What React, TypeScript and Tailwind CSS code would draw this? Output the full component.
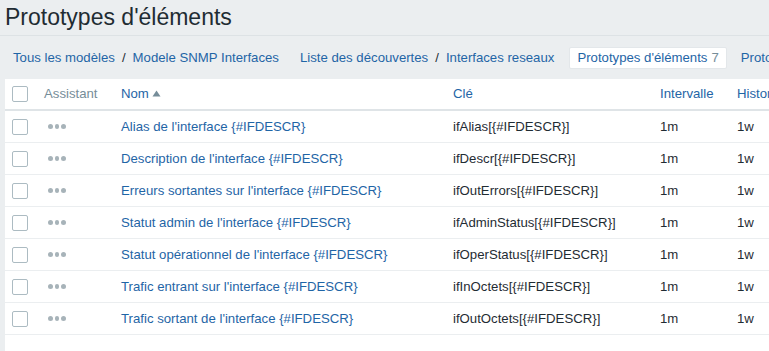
import React from 'react';

const rows = [
  { name: "Alias de l'interface {#IFDESCR}", key: 'ifAlias[{#IFDESCR}]' },
  { name: "Description de l'interface {#IFDESCR}", key: 'ifDescr[{#IFDESCR}]' },
  { name: "Erreurs sortantes sur l'interface {#IFDESCR}", key: 'ifOutErrors[{#IFDESCR}]' },
  { name: "Statut admin de l'interface {#IFDESCR}", key: 'ifAdminStatus[{#IFDESCR}]' },
  { name: "Statut opérationnel de l'interface {#IFDESCR}", key: 'ifOperStatus[{#IFDESCR}]' },
  { name: "Trafic entrant sur l'interface {#IFDESCR}", key: 'ifInOctets[{#IFDESCR}]' },
  { name: "Trafic sortant de l'interface {#IFDESCR}", key: 'ifOutOctets[{#IFDESCR}]' },
];

const cols = 'grid grid-cols-[32px_77px_332px_207px_77px_200px]';

function Checkbox() {
  return <span className="block w-4 h-4 bg-white border border-[#acbbc2] rounded-[2px]" />;
}

function Dots() {
  return (
    <span className="flex gap-[2px]">
      <span className="w-[4.5px] h-[4.5px] rounded-full bg-[#a7b3b9]" />
      <span className="w-[4.5px] h-[4.5px] rounded-full bg-[#a7b3b9]" />
      <span className="w-[4.5px] h-[4.5px] rounded-full bg-[#a7b3b9]" />
    </span>
  );
}

export default function App() {
  return (
    <div className="w-[769px] h-[351px] overflow-hidden bg-[#ebeef0] text-[13.2px] text-[#1f2c33] font-['Liberation_Sans',Arial,sans-serif]">
      {/* Title */}
      <div className="h-[36px] border-b border-[#dde2e5] pl-[5px] flex items-start">
        <h1 className="text-[23px] leading-[34px] whitespace-nowrap">Prototypes d'éléments</h1>
      </div>

      {/* Breadcrumbs */}
      <div className="h-[43px] flex items-center whitespace-nowrap pl-[13px] text-[#1f65a6]">
        <span>Tous les modèles</span>
        <span className="mx-[7px] text-[#1f2c33]">/</span>
        <span>Modele SNMP Interfaces</span>
        <span className="ml-[21px]">Liste des découvertes</span>
        <span className="mx-[7px] text-[#1f2c33]">/</span>
        <span>Interfaces reseaux</span>
        <span className="ml-[15px] h-[22px] px-[7px] flex items-center bg-white border border-[#e3e7ea] rounded-[2px]">
          Prototypes d'éléments <span className="ml-[4px] text-[#768d99]">7</span>
        </span>
        <span className="ml-[14px]">Prototypes de déclencheurs</span>
      </div>

      {/* Table */}
      <div className="ml-[5px] bg-white whitespace-nowrap">
        <div className={`${cols} h-[32px] items-center border-b-2 border-[#dfe4e7] pl-[7px]`}>
          <Checkbox />
          <span className="text-[#768d99]">Assistant</span>
          <span className="text-[#1f65a6] flex items-center">
            Nom
            <svg width="9" height="7" viewBox="0 0 9 7" className="ml-[3px]">
              <path d="M4.5 0.5 L8.5 6.5 L0.5 6.5 Z" fill="#768d99" />
            </svg>
          </span>
          <span className="text-[#1f65a6]">Clé</span>
          <span className="text-[#1f65a6]">Intervalle</span>
          <span className="text-[#1f65a6]">Historique</span>
        </div>
        {rows.map((r) => (
          <div key={r.key} className={`${cols} h-[32px] items-center border-b border-[#ebeef0] pl-[7px]`}>
            <Checkbox />
            <span className="pl-[4px]"><Dots /></span>
            <span className="text-[#1f65a6]">{r.name}</span>
            <span>{r.key}</span>
            <span>1m</span>
            <span>1w</span>
          </div>
        ))}
        <div className="h-[20px]" />
      </div>
    </div>
  );
}
